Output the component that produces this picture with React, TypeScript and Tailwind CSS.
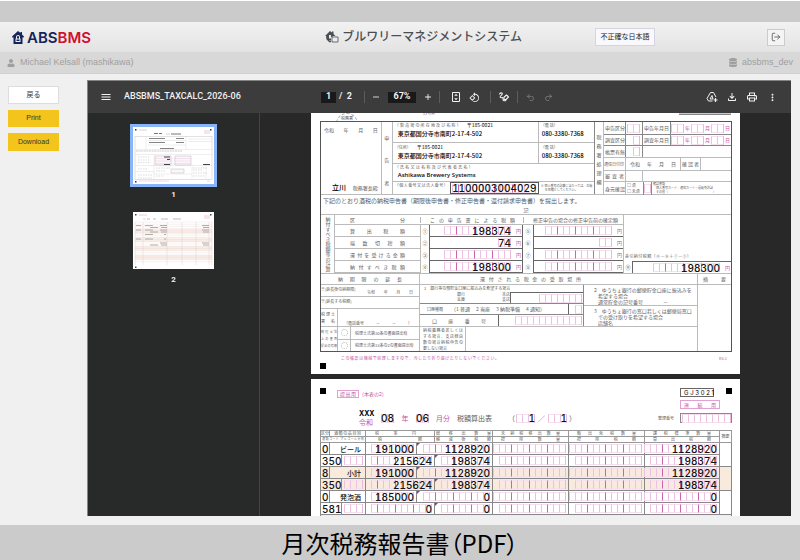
import { useState, type ReactNode } from 'react';
import clsx from 'clsx';
import { LogOut, Undo2, Redo2 } from 'lucide-react';
import { FaDatabase, FaUser } from 'react-icons/fa';
import {
  MdAdd,
  MdMenu,
  MdMoreVert,
  MdOutlineFileDownload,
  MdOutlinePrint,
  MdOutlineRotate90DegreesCcw,
  MdRemove,
} from 'react-icons/md';

/* ---------- small form helpers ---------- */

// Label whose characters are distributed over the full cell width
function Spread({ children, className }: { children: string; className?: string }) {
  return (
    <span className={clsx('block whitespace-nowrap [text-align-last:justify]', className)}>
      {children}
    </span>
  );
}

// Row of pink digit boxes, grouped by three from the right
function Digits({ count, value = '', faint = false }: { count: number; value?: string; faint?: boolean }) {
  return (
    <span className="grid shrink-0">
      <span className="col-start-1 row-start-1 flex self-center border-r border-[#e9b9dc]">
        {Array.from({ length: count }, (_, i) => (
          <span
            key={i}
            className={clsx(
              'h-[9px] w-[6px] border-y border-l border-y-[#f6e0f0]',
              !faint && i > 0 && (count - i) % 3 === 0 ? 'border-l-[#cf62ae]' : 'border-l-[#ebc0e0]'
            )}
          />
        ))}
      </span>
      <span className="col-start-1 row-start-1 self-center text-right font-['Inter'] text-[10px] leading-[10px] font-medium text-[#111] tabular-nums">
        {value}
      </span>
    </span>
  );
}

function Amount({ count = 11, value }: { count?: number; value?: string }) {
  return (
    <div className="flex h-full items-center justify-end gap-[5px] pr-px">
      <Digits count={count} value={value} />
      <span className="text-[5px] text-[#c552a3]">円</span>
    </div>
  );
}

function Marker() {
  return <span className="block h-[6px] w-[6px] bg-black" />;
}

/* ---------- page 1: tax return ---------- */

function DateBoxes() {
  return (
    <div className="flex items-center justify-end gap-px pr-px text-[5px] text-[#c552a3]">
      <Digits count={2} faint />年
      <Digits count={2} faint />月
      <Digits count={2} faint />日
    </div>
  );
}

function OfficeUse() {
  return (
    <div className="grid flex-1 grid-rows-[13px_11px_12px_13px_11px_13px] text-[5px] leading-[6px]">
      <div className="flex border-b border-[#888]">
        <span className="w-[21px] self-center px-px whitespace-nowrap">申告区分</span>
        <span className="flex w-[18px] items-center justify-end border-x border-[#888] pr-[2px]"><Digits count={2} faint /></span>
        <span className="w-[27px] self-center px-px whitespace-nowrap">申告年月日</span>
        <div className="flex flex-1 items-center justify-end border-l border-[#888]"><DateBoxes /></div>
      </div>
      <div className="flex border-b border-[#888]">
        <span className="w-[21px] self-center px-px whitespace-nowrap">調査区分</span>
        <span className="flex w-[18px] items-center justify-end border-x border-[#888] pr-[2px]"><Digits count={1} faint /></span>
        <span className="w-[27px] self-center px-px whitespace-nowrap">調査年月日</span>
        <div className="flex flex-1 items-center justify-end border-l border-[#888]"><DateBoxes /></div>
      </div>
      <div className="flex border-b border-[#bbb]">
        <span className="w-[21px] self-center px-px whitespace-nowrap">帳票有無</span>
        <span className="flex w-[18px] items-center justify-end border-x border-[#888] pr-[2px]"><Digits count={1} faint /></span>
      </div>
      <div className="flex border-b border-[#bbb]">
        <span className="w-[21px] self-center text-[4px] whitespace-nowrap">通信日付印</span>
        <div className="flex w-[55px] items-center justify-between border-l border-[#bbb] px-[4px]">
          <span>令和</span><span>年</span><span>月</span><span>日</span>
        </div>
        <span className="flex w-[21px] items-center border-x border-[#bbb]">
          <Spread className="w-full px-px">確認者</Spread>
        </span>
      </div>
      <div className="flex border-b border-[#bbb]">
        <Spread className="w-[21px] self-center px-px">審査者</Spread>
        <span className="w-[18px] border-x border-[#bbb]" />
      </div>
      <div className="flex">
        <span className="w-[21px] self-center px-px whitespace-nowrap">身元確認</span>
        <div className="w-[18px] border-l border-[#bbb] pl-px text-[4px] leading-[6px] whitespace-nowrap">
          <p>□ 済</p>
          <p>□ 未済</p>
        </div>
        <span className="flex w-[9px] items-center justify-center border-x border-[#888]"><Digits count={1} faint /></span>
        <div className="pl-px text-[3px] leading-[4px] whitespace-nowrap">
          <p>確認書類</p>
          <p className="pl-[3px]">個人番号カード／通知カード・運転免許証</p>
          <p className="pl-[3px]">その他（　　　　　　　　　　　　　　　）</p>
        </div>
      </div>
    </div>
  );
}

function Applicant() {
  return (
    <div className="flex w-[203px] flex-col border-r border-[#888] text-[4px] leading-[6px]">
      <div className="flex h-[21px] border-b border-[#bbb]">
        <div className="w-[146px] border-r border-[#bbb] pl-[2px]">
          <div className="flex gap-[6px]">
            <Spread className="w-[66px]">（製造場の所在地及び名称）</Spread>
            <span className="text-[5px] text-black">〒185-0021</span>
          </div>
          <p className="pl-[3px] text-[6px] leading-[12px] font-medium text-black">東京都国分寺市南町2-17-4-502</p>
        </div>
        <div className="pl-[2px]">
          <p>（電 話）</p>
          <p className="pl-px text-[6px] leading-[12px] font-medium text-black">080-3380-7368</p>
        </div>
      </div>
      <div className="flex h-[22px] border-b border-[#bbb]">
        <div className="w-[146px] border-r border-[#bbb] pt-px pl-[2px]">
          <div className="flex gap-[6px]">
            <Spread className="w-[16px]">（住所）</Spread>
            <span className="text-[5px] text-black">〒185-0021</span>
          </div>
          <p className="pl-[3px] text-[6px] leading-[12px] font-medium text-black">東京都国分寺市南町2-17-4-502</p>
        </div>
        <div className="pt-px pl-[2px]">
          <p>（電 話）</p>
          <p className="pl-px text-[6px] leading-[12px] font-medium text-black">080-3380-7368</p>
        </div>
      </div>
      <div className="h-[18px] border-b border-[#bbb] pl-[2px]">
        <Spread className="w-[78px]">（氏名又は名称及び代表者氏名）</Spread>
        <p className="pl-[3px] font-['Noto_Sans'] text-[6px] leading-[10px] font-medium text-black">Ashikawa Brewery Systems</p>
      </div>
      <div className="flex flex-1">
        <Spread className="w-[57px] pr-[2px] pl-[2px]">（個人番号又は法人番号）</Spread>
        <div className="flex w-[89px] items-center justify-center border border-[#555]">
          <Digits count={13} value="1100003004029" />
        </div>
        <div className="pt-[2px] pl-[2px] text-[3px] leading-[4px] whitespace-nowrap">
          <p>※ 個人番号の記載に当たっては、左端</p>
          <p className="pl-[4px]">を空欄としてください。</p>
        </div>
      </div>
    </div>
  );
}

const taxRows = [
  { label: '算出税額', left: '①', value: '198374', count: 11, right: '⑤', rightCount: 11 },
  { label: '端数切捨額', left: '②', value: '74', count: 2, right: '⑥', rightCount: 2 },
  { label: '還付を受ける金額', left: '③', value: '', count: 11, right: '⑦', rightCount: 11 },
  { label: '納付すべき税額', left: '④', value: '198300', count: 11, right: '⑧', rightCount: 11 },
];

function TaxAmounts() {
  return (
    <div className="flex h-[59px] border-b border-[#bbb] text-[5px] leading-[6px]">
      <div className="flex w-[14px] items-center justify-center border-r border-[#bbb]">
        <span className="[writing-mode:vertical-rl]">納付すべき税額等の計算</span>
      </div>
      <div className="w-[289px] border-r border-[#bbb]">
        <div className="flex h-[10px] items-center border-b border-[#bbb]">
          <Spread className="w-[85px] px-[15px]">区分</Spread>
          <Spread className="w-[103px] border-l border-[#bbb] pr-[8px] pl-[9px]">この申告書による税額</Spread>
          <span className="flex-1 border-l border-[#bbb] pl-[9px]">修正申告の場合の修正申告前の確定額</span>
        </div>
        {taxRows.map((row) => (
          <div key={row.label} className="flex h-[12px]">
            <Spread className="w-[85px] border-b border-[#bbb] px-[15px] leading-[12px]">{row.label}</Spread>
            <span className="w-[9px] border-l border-[#bbb] text-center leading-[12px]">{row.left}</span>
            <div className="w-[94px] border-x border-b border-[#666]"><Amount count={row.count} value={row.value} /></div>
            <span className="w-[10px] text-center leading-[12px]">{row.right}</span>
            <div className="flex-1 border-b border-l border-[#666]"><Amount count={row.rightCount} /></div>
          </div>
        ))}
      </div>
      <div className="flex flex-1 flex-col justify-end">
        <Spread className="mb-[2px] ml-px w-[66px] text-[4px]">差引納付税額（④－⑧＋⑦－③）</Spread>
        <div className="flex h-[12px]">
          <span className="w-[8px] text-center leading-[12px]">⑨</span>
          <div className="flex-1 border-t border-l border-[#666]"><Amount value="198300" /></div>
        </div>
      </div>
    </div>
  );
}

function Extension() {
  return (
    <div className="w-[99px] border-r border-[#bbb] text-[4px] leading-[6px]">
      <div className="flex h-[12px] border-b border-[#bbb] pt-px">
        <span className="w-[46px] whitespace-nowrap">※(延長後の納期限)</span>
        <div className="flex flex-1 justify-between pt-[3px] pr-[6px]">
          <span>令和</span><span>年</span><span>月</span><span>日</span>
        </div>
      </div>
      <div className="h-[12px] border-b border-[#bbb] pt-px">※(延長する税額)</div>
      <div className="flex h-[18px] border-b border-[#bbb]">
        <div className="flex w-[17px] flex-col justify-between border-r border-[#bbb] py-[2px] pr-[2px]">
          <Spread>税理士</Spread>
          <Spread>署名</Spread>
        </div>
        <span className="self-end pl-[6px] whitespace-pre">（電話番号　　　－　　　－　　　）</span>
      </div>
      <div className="flex h-[24px]">
        <div className="w-[17px] border-r border-[#bbb] pt-[2px] text-[3px] leading-[7px] whitespace-nowrap">
          <Spread>税理士法</Spread>
          <Spread>上の書面</Spread>
          <Spread>提出の有無</Spread>
        </div>
        <div className="flex flex-1 flex-col">
          {['税理士法第30条の書面提出有', '税理士法第33条の2の書面提出有'].map((label) => (
            <div key={label} className="flex flex-1 border-b border-[#bbb] last:border-b-0">
              <span className="flex w-[13px] items-center justify-center border-r border-[#bbb]">
                <span className="h-[7px] w-[7px] rounded-full border border-dotted border-[#bbb]" />
              </span>
              <span className="self-center pl-[4px] whitespace-nowrap">{label}</span>
            </div>
          ))}
        </div>
      </div>
    </div>
  );
}

function Refund() {
  return (
    <div className="flex w-[278px] flex-col border-r border-[#bbb] text-[5px] leading-[6px]">
      <div className="flex h-[42px] border-b border-[#bbb]">
        <div className="flex w-[164px] flex-col border-r border-[#888]">
          <p className="h-[7px] pt-px pl-[4px] text-[4px] leading-[5px] whitespace-nowrap">1　銀行等の預貯金口座に振込みを希望する場合</p>
          <div className="flex h-[11px] text-[4px] leading-[5px]">
            <div className="w-[82px] pl-[37px]"><p>銀行</p><p>金庫</p></div>
            <div className="w-[8px]"><p>本店</p><p>支店</p></div>
            <div className="flex flex-1 items-center justify-end border-t border-l border-[#666] pr-px"><Digits count={7} faint /></div>
          </div>
          <div className="flex h-[12px] items-center border-y border-[#888] pl-[7px] whitespace-pre">
            <span className="text-[4px]">口座種類</span>
            <span className="flex-1 pl-[8px]">（1 普通　 2 当座　 3 納税準備　 4 通知）</span>
            <span className="flex h-full w-[15px] items-center justify-end border-l border-[#666] pr-px"><Digits count={1} faint /></span>
          </div>
          <div className="flex flex-1 items-center">
            <Spread className="w-[78px] pr-[12px] pl-[12px]">口座番号</Spread>
            <div className="flex h-full flex-1 items-center justify-end border-l border-[#666] pr-px"><Digits count={11} faint /></div>
          </div>
        </div>
        <div className="flex flex-1 flex-col whitespace-pre">
          <div className="h-[21px] border-b border-[#bbb] pt-[2px] pl-[10px]">
            <p>2　ゆうちょ銀行の郵便貯金口座に振込みを</p>
            <p className="pl-[4px]">希望する場合</p>
            <p className="pl-[4px]">通常貯金の記号番号　<span className="border-b border-[#bbb]">　　　－　　　　</span></p>
          </div>
          <div className="pt-[2px] pl-[10px]">
            <p>3　ゆうちょ銀行の窓口若しくは郵便局窓口</p>
            <p className="pl-[4px]">での受け取りを希望する場合</p>
            <p className="pl-[4px]">店舗名<span className="border-b border-[#bbb]">　　　　　　　　　　　</span></p>
          </div>
        </div>
      </div>
      <div className="w-[46px] flex-1 border-r border-[#bbb] pl-[3px] text-[4px] leading-[6px]">
        <Spread className="w-[40px]">納税義務者若しくは</Spread>
        <Spread className="w-[40px]">する場合、支店経由</Spread>
        <Spread className="w-[40px]">数の場合納税申告の</Spread>
        <p>要しない場合</p>
      </div>
    </div>
  );
}

function ReturnPage() {
  return (
    <section className="h-[261px] w-[429px] shrink-0 bg-white pr-[8px] pl-[9px] text-[#5c5c5c]">
      <div className="flex h-[8px] items-start overflow-hidden">
        <span className="ml-[16px] h-[22px] w-[22px] rounded-full border border-dashed border-[#aaa] pt-[2px] text-center text-[4px] leading-[5px]">税務署</span>
        <span className="-mt-[6px] ml-[63px] text-[7px] leading-[9px] text-[#c552a3]">令和</span>
        <span className="ml-auto mr-[1px] h-[2px] w-[52px] border-b border-[#888] bg-[#e0b8d6]" />
      </div>
      <div className="border border-[#555]">
        <div className="flex h-[73px] border-b border-[#bbb]">
          <div className="flex w-[61px] flex-col justify-between border-r border-[#bbb] px-[3px] pt-[5px] pb-[3px]">
            <div className="flex justify-between text-[5px] leading-[6px]">
              <span>令和</span><span>年</span><span>月</span><span>日</span>
            </div>
            <div className="flex items-end justify-between pl-[8px] whitespace-nowrap">
              <span className="text-[7px] leading-[8px] font-medium text-black">立川</span>
              <span className="text-[5px] leading-[6px]">税務署長殿</span>
            </div>
          </div>
          <div className="flex w-[11px] flex-col items-center justify-around border-r border-[#bbb] pt-[5px] text-[5px] leading-[6px]">
            <span>申</span><span>告</span><span>者</span>
          </div>
          <Applicant />
          <div className="flex w-[9px] flex-col items-center justify-center border-r border-[#bbb] pt-[2px] text-[5px] leading-[9px]">
            <span>税</span><span>務</span><span>署</span><span>処</span><span>理</span><span>欄</span>
          </div>
          <OfficeUse />
        </div>
        <div className="h-[20px] border-b border-[#bbb]">
          <p className="pt-px pl-[2px] text-[6px] leading-[9px]">下記のとおり酒税の納税申告書（期限後申告書・修正申告書・還付請求申告書）を提出します。</p>
          <p className="text-center text-[5px] leading-[9px]">記</p>
        </div>
        <TaxAmounts />
        <div className="flex h-[11px] items-center border-b border-[#bbb] text-[5px] leading-[10px]">
          <Spread className="w-[99px] border-r border-[#bbb] px-[17px]">納期限の延長</Spread>
          <Spread className="w-[278px] border-r border-[#bbb] pr-[116px] pl-[60px]">還付される税金の受取場所</Spread>
          <Spread className="flex-1 px-[5px]">摘要</Spread>
        </div>
        <div className="flex h-[66px]">
          <Extension />
          <Refund />
        </div>
      </div>
      <div className="flex justify-between pt-[3px] pl-[21px] text-[4px] leading-[7px] text-[#c552a3]">
        <Spread className="w-[158px]">この帳票は機械で処理しますので、汚したり折り曲げたりしないでください。</Spread>
        <span className="pr-[5px]">R3.1</span>
      </div>
      <div className="pt-px"><Marker /></div>
    </section>
  );
}

/* ---------- page 2: tax calculation table ---------- */

interface Group {
  code: string;
  name: string;
  rate: string;
  volume: string;
  kind: string;
  tax: string;
  net: string;
}

const groups: Group[] = [
  { code: '0', name: 'ビール', rate: '191000', volume: '1128920', kind: '350', tax: '215624', net: '198374' },
  { code: '8', name: '小計', rate: '191000', volume: '1128920', kind: '350', tax: '215624', net: '198374' },
  { code: '0', name: '発泡酒', rate: '185000', volume: '0', kind: '581', tax: '0', net: '0' },
];

function Cell({ span = 1, notch = false, children }: { span?: number; notch?: boolean; children: ReactNode }) {
  return (
    <td colSpan={span} className="border border-[#888] p-0">
      <div className="flex h-[11px] items-center justify-end pr-[2px]">
        {notch && <span className="mr-auto h-0 w-0 self-start border-t-[3px] border-r-[3px] border-t-[#a8327f] border-r-transparent" />}
        {children}
      </div>
    </td>
  );
}

function CalcTable() {
  const th = 'h-[6px] border border-[#999] p-0 font-normal';
  return (
    <table className="w-full table-fixed border-collapse border border-[#444] text-[4px] leading-[5px]">
      <colgroup>
        <col className="w-[9px]" />
        <col className="w-[12px]" />
        <col className="w-[24px]" />
        <col className="w-[51px]" />
        <col className="w-[18px]" />
        <col className="w-[58px]" />
        <col className="w-[76px]" />
        <col className="w-[76px]" />
        <col className="w-[75px]" />
        <col />
      </colgroup>
      <thead>
        <tr>
          <th className={th}>区分</th>
          <th colSpan={2} className={th}><Spread className="px-[4px]">酒類の品目別</Spread></th>
          <th colSpan={2} className={th}><Spread className="pr-[18px] pl-[9px]">税率円</Spread></th>
          <th className={th}><Spread className="px-px">総移出数量</Spread></th>
          <th className={th}><Spread className="px-[8px]">未納税移出数量</Spread></th>
          <th className={th}><Spread className="px-[8px]">輸出免税数量</Spread></th>
          <th className={th}><Spread className="px-[8px]">課税標準数量</Spread></th>
          <th rowSpan={2} className={th}>摘要</th>
        </tr>
        <tr>
          <th colSpan={3} className={th}><Spread className="px-px text-[3px]">酒類コード アルコール分別</Spread></th>
          <th colSpan={2} className={th}><Spread className="px-[12px]">税額</Spread></th>
          <th className={th}><Spread className="px-px">軽減後税額</Spread></th>
          <th className={th}><Spread className="px-[8px]">控除数量</Spread></th>
          <th className={th}><Spread className="px-[8px]">控除税額</Spread></th>
          <th className={th}><Spread className="px-[8px]">算出税額</Spread></th>
        </tr>
      </thead>
      {groups.map((g, i) => (
        <tbody key={i} className={clsx('border-t border-[#444]', i % 2 === 1 && 'bg-[#f8eadc]')}>
          <tr>
            <td className="border border-[#888] p-0 pl-px font-['Inter'] text-[10px] leading-[10px] font-medium text-[#111]">{g.code}</td>
            <td colSpan={2} className="border border-[#888] p-0 pr-[4px] text-right text-[7px] leading-[10px] font-medium text-[#111]">{g.name}</td>
            <Cell><Digits count={7} value={g.rate} /></Cell>
            <Cell span={2} notch><Digits count={11} value={g.volume} /></Cell>
            <Cell><Digits count={12} /></Cell>
            <Cell><Digits count={12} /></Cell>
            <Cell><Digits count={12} value={g.volume} /></Cell>
            <td rowSpan={2} className="border border-[#888] p-0" />
          </tr>
          <tr>
            <td colSpan={2} className="border border-[#888] p-0 pl-px font-['Inter'] text-[10px] leading-[10px] font-medium text-[#111] tabular-nums">{g.kind}</td>
            <Cell><Digits count={3} faint /></Cell>
            <Cell span={2}><Digits count={10} value={g.tax} /></Cell>
            <Cell notch><Digits count={8} value={g.net} /></Cell>
            <Cell><Digits count={11} /></Cell>
            <Cell><Digits count={11} /></Cell>
            <Cell><Digits count={11} value={g.net} /></Cell>
          </tr>
        </tbody>
      ))}
      <tbody className="border-t border-[#444] bg-[#f8eadc]">
        <tr>
          <td colSpan={10} className="h-[12px] border border-[#888] p-0" />
        </tr>
      </tbody>
    </table>
  );
}

function CalcPage() {
  return (
    <section className="h-[300px] w-[429px] shrink-0 bg-white pt-[9px] pr-[8px] pl-[9px] text-[#5c5c5c]">
      <div className="flex h-[42px] justify-between">
        <div>
          <div className="flex items-start text-[5px] leading-[7px] text-[#c552a3]">
            <Marker />
            <span className="mt-[2px] ml-[11px] w-[22px] border border-[#e29fcf]"><Spread className="px-[2px] leading-[6px]">提出用</Spread></span>
            <span className="mt-[2px]">（本表の2）</span>
          </div>
          <div className="flex h-[32px] items-center pt-[8px] pl-[39px] text-[7px] leading-[8px]">
            <div className="w-[22px]">
              <p className="font-['Inter'] font-bold text-black">XXX</p>
              <p className="text-[#c552a3]">令和</p>
            </div>
            <Digits count={2} value="08" faint />
            <span className="w-[22px] text-center text-[#c552a3]">年</span>
            <Digits count={2} value="06" faint />
            <span className="w-[28px] text-center text-[#c552a3]">月分</span>
            <span className="w-[51px]">税額算出表</span>
            <span className="w-[8px]">（</span>
            <Digits count={3} value="1" faint />
            <span className="w-[13px] text-center text-[#c552a3]">／</span>
            <Digits count={3} value="1" faint />
            <span className="pl-[2px]">）</span>
          </div>
        </div>
        <div className="w-[74px]">
          <div className="flex items-start justify-between pl-[22px]">
            <Spread className="w-[34px] border border-[#666] px-[3px] font-['Inter'] text-[6px] leading-[7px] text-black">G J 3 0 2 1</Spread>
            <Marker />
          </div>
          <Spread className="mt-[3px] ml-[22px] w-[40px] border border-[#e29fcf] px-[3px] text-[5px] leading-[7px] text-[#c552a3]">連続用</Spread>
          <div className="mt-[4px] flex items-center justify-between">
            <span className="text-[4px]">整理番号</span>
            <span className="flex h-[10px] w-[52px] items-center justify-center border border-[#888]"><Digits count={8} faint /></span>
          </div>
        </div>
      </div>
      <CalcTable />
    </section>
  );
}

/* ---------- thumbnails ---------- */

function ReturnThumb() {
  return (
    <svg viewBox="0 0 81 57" className="block h-[57px] w-[81px] bg-white" aria-hidden="true">
      <path d="M2 2h1.5v1.500H2zM77 2h1.500v1.500H77zM2 54h1.500v1.500H2z" fill="#333" />
      <path d="M6 3h8M71 4h6M71 6h6M33 7h4" stroke="#edc8e0" strokeWidth="1" />
      <path d="M21 6.500h4M26 6.500h3M38 7h10" stroke="#777" strokeWidth="1" />
      <rect x="2" y="9.500" width="77" height="43" fill="none" stroke="#c4c4c4" strokeWidth=".5" />
      <path d="M13 9.500v13M53 9.500v13M55 12h24M55 14.500h24M15 13.500h38M15 18h38M2 22.500h77M2 27.500h77M2 38.500h77M21 27.500v25M59 38.500v14M73 36v16M2 44.500h19M21 47h38" stroke="#d4d4d4" strokeWidth=".4" />
      <path d="M16 11.500h16M16 15.500h16M43 11.500h8M43 15.500h8M27 21.500h14" stroke="#666" strokeWidth=".8" />
      <path d="M3 24h46" stroke="#b4b4b4" strokeWidth=".7" strokeDasharray="2 .6" />
      <path d="M22 29h16v9H22zM42 29h16v9H42z" fill="#fcf6fa" stroke="#aaa" strokeWidth=".4" />
      <path d="M22 31.500h36M22 34h36M22 36.500h36" stroke="#e6c4dc" strokeWidth=".4" />
      <path d="M31 30h6M34 32.500h3M31 37.500h6M70 37.500h7" stroke="#444" strokeWidth="1" />
      <path d="M5 30h12M5 33h12M5 35.500h12M23 41h14M23 44h10M23 49h8M60 41h14M60 43h10M60 46h14M60 49h12M5 42h10M5 48h14M5 51h14" stroke="#c4c4c4" strokeWidth=".6" strokeDasharray="1.500 1" />
      <path d="M38 42h13v4H38z" fill="#fcf6fa" stroke="#aaa" strokeWidth=".4" />
      <path d="M6 54h30M74 54h3" stroke="#edc8e0" strokeWidth=".8" />
    </svg>
  );
}

function CalcThumb() {
  const bands = [17, 25.5, 34, 43];
  return (
    <svg viewBox="0 0 81 57" className="block h-[57px] w-[81px] bg-white" aria-hidden="true">
      <path d="M2 2h1.500v1.500H2zM77 2h1.500v1.500H77zM2 54.500h1.500V56H2z" fill="#444" />
      <path d="M6 3h8M71 4h6M71 6h6M10 7h3" stroke="#edc8e0" strokeWidth="1" />
      <path d="M14 7h3M20 7h3M28 7h7M40 7h8" stroke="#aaa" strokeWidth=".8" />
      {bands.map((y) => (
        <rect key={y} x="2" y={y} width="77" height="4.500" fill="#faeee6" />
      ))}
      {Array.from({ length: 19 }, (_, i) => (
        <path key={i} d={`M2 ${10 + i * 2.2}h77`} stroke="#e2cccc" strokeWidth=".3" />
      ))}
      <path d="M2 10v43M10 10v43M34 10v43M49 10v43M63 10v43M76 10v43M79 10v43" stroke="#dcc8ce" strokeWidth=".4" />
      <path d="M12 13.500h8M17 15.500h8M27 13.500h7M28 15.500h6M69 13.500h7M70 15.500h6M12 18h8M17 20h8M27 18h7M28 20h6M69 18h7M70 20h6M12 22.500h8M31 22.500h2M12 27h8M31 27h2M17 33h8M27 31h7M28 33h6M69 31h7M70 33h6M3 13.500h5M3 18h5M3 27h5" stroke="#a09a9a" strokeWidth=".8" />
    </svg>
  );
}

/* ---------- icons missing from the icon sets ---------- */

function FitPageIcon() {
  return (
    <svg viewBox="0 0 24 24" className="h-3 w-3" fill="currentColor" aria-hidden="true">
      <path fillRule="evenodd" d="M6 2h12a2 2 0 0 1 2 2v16a2 2 0 0 1-2 2H6a2 2 0 0 1-2-2V4c0-1.100.9-2 2-2zm0 2v16h12V4zm6 1.500 3.500 4h-7zm0 13-3.500-4h7z" />
    </svg>
  );
}

function InkIcon() {
  return (
    <svg viewBox="0 0 24 24" className="h-3 w-3" fill="none" stroke="currentColor" strokeWidth="2.200" strokeLinecap="round" strokeLinejoin="round" aria-hidden="true">
      <path d="M3 6c2-3 6-3 5.500 0S3 10 4.500 12.500 9 12 10 14s-1 4 1 5 4 0 5-1" />
      <path d="M12 12.500 17 8l4 4-5 5h-4z" />
    </svg>
  );
}

function DriveAddIcon() {
  return (
    <svg viewBox="0 0 24 24" className="h-3 w-3" fill="none" stroke="currentColor" strokeWidth="2" strokeLinejoin="round" aria-hidden="true">
      <path d="M13 20H5l-3-5L9 3h6l5 9M12 9l-4 7h6z" />
      <path d="M19 14v8M15 18h8" strokeWidth="2.400" />
    </svg>
  );
}

function HouseLogo() {
  return (
    <svg viewBox="0 0 24 26" className="h-[13px] w-[12px]" aria-hidden="true">
      <path d="M12 0 17 4V2h3v5l4 4-1.500 2.500L21 12.500V26H3V12.500L1.500 13.500 0 11z" fill="#14245c" />
      <path d="M8 12a4 4 0 0 1 8 0v3h1v7H7v-7h1z" fill="#f0f0f0" />
      <path d="M10 12a2 2 0 0 1 4 0v3h-4zM9 17h6v3H9z" fill="#14245c" />
    </svg>
  );
}

function HouseCopyIcon() {
  return (
    <svg viewBox="0 0 28 24" className="h-[12px] w-[14px]" aria-hidden="true">
      <path d="M10 0 14 3V1h3v5l4 4h-6v2h-3V8H8v7h4v4H7l-4-5v-4H0z" fill="#4a4f54" />
      <path d="M4 10v6l5 5h3" fill="none" stroke="#4a4f54" strokeWidth="2.500" />
      <path d="M14 12h12v10H14z" fill="#ececec" stroke="#5a5f64" strokeWidth="1.800" />
    </svg>
  );
}

/* ---------- viewer ---------- */

function ToolButton({ label, children, className }: { label: string; children: ReactNode; className?: string }) {
  return (
    <button type="button" aria-label={label} className={clsx('flex h-3 w-3 shrink-0 items-center justify-center', className)}>
      {children}
    </button>
  );
}

function Toolbar() {
  const [page, setPage] = useState('1');
  const [zoom, setZoom] = useState('67%');

  return (
    <div className="flex h-8 shrink-0 items-center bg-[#3c3c3c] pr-[13px] pl-3 font-['Roboto'] text-[9px] font-bold text-[#f1f1f1]">
      <ToolButton label="Menu"><MdMenu className="h-3 w-3" /></ToolButton>
      <span className="ml-3 w-[197px] font-medium whitespace-nowrap">ABSBMS_TAXCALC_2026-06</span>
      <input
        aria-label="Page"
        value={page}
        onChange={(e) => setPage(e.target.value)}
        className="h-[11px] w-[15px] bg-[#191919] text-center outline-none"
      />
      <span className="ml-[3px] w-[25px] whitespace-pre">/  2</span>
      <span className="h-3 w-px bg-[#5c5c5c]" />
      <ToolButton label="Zoom out" className="ml-[5px]"><MdRemove className="h-[10px] w-[10px]" /></ToolButton>
      <input
        aria-label="Zoom"
        value={zoom}
        onChange={(e) => setZoom(e.target.value)}
        className="mx-[6px] h-[11px] w-7 bg-[#191919] text-center outline-none"
      />
      <ToolButton label="Zoom in"><MdAdd className="h-[10px] w-[10px]" /></ToolButton>
      <span className="ml-[5px] h-3 w-px bg-[#5c5c5c]" />
      <ToolButton label="Fit to page" className="ml-[10px]"><FitPageIcon /></ToolButton>
      <ToolButton label="Rotate" className="ml-[6px]"><MdOutlineRotate90DegreesCcw className="h-[11px] w-[11px]" /></ToolButton>
      <span className="ml-[10px] h-3 w-px bg-[#5c5c5c]" />
      <ToolButton label="Annotate" className="ml-[7px]"><InkIcon /></ToolButton>
      <span className="ml-[7px] h-3 w-px bg-[#5c5c5c]" />
      <ToolButton label="Undo" className="ml-[6px] text-[#858585]"><Undo2 className="h-[9px] w-[9px]" /></ToolButton>
      <ToolButton label="Redo" className="ml-[6px] text-[#858585]"><Redo2 className="h-[9px] w-[9px]" /></ToolButton>
      <div className="ml-auto flex gap-2">
        <ToolButton label="Save to Drive"><DriveAddIcon /></ToolButton>
        <ToolButton label="Download file"><MdOutlineFileDownload className="h-3 w-3" /></ToolButton>
        <ToolButton label="Print file"><MdOutlinePrint className="h-3 w-3" /></ToolButton>
        <ToolButton label="More"><MdMoreVert className="h-[11px] w-[11px]" /></ToolButton>
      </div>
    </div>
  );
}

function PdfViewer() {
  return (
    <div className="flex min-w-0 flex-1 flex-col overflow-hidden border-t border-l border-[#858585]">
      <Toolbar />
      <div className="flex min-h-0 flex-1">
        <nav className="flex w-[172px] shrink-0 flex-col items-center border-r border-[#444] bg-[#282a29] pt-[11px] font-['Roboto'] text-[8px] leading-[12px] font-bold text-[#eee]">
          <button type="button" className="flex flex-col items-center">
            <span className="border-3 border-[#8ab4f8]"><ReturnThumb /></span>
            <span className="mt-[2px]">1</span>
          </button>
          <button type="button" className="mt-[11px] flex flex-col items-center">
            <CalcThumb />
            <span className="mt-[5px]">2</span>
          </button>
        </nav>
        <main className="flex min-w-0 flex-1 flex-col items-center gap-[5px] overflow-hidden bg-[#282828] font-['Noto_Sans_CJK_JP',sans-serif]">
          <ReturnPage />
          <CalcPage />
        </main>
      </div>
    </div>
  );
}

/* ---------- application shell ---------- */

export default function App() {
  return (
    <div className="flex h-screen flex-col overflow-hidden bg-[#f0f0f0] font-['Liberation_Sans','Noto_Sans_CJK_JP',sans-serif]">
      <div className="h-[22px] shrink-0 border-t border-white bg-[#cbcbcb]" />
      <header className="flex h-[30px] shrink-0 items-center bg-linear-to-b from-[#f2f2f2] to-[#e3e3e3] pr-[15px] pl-3">
        <a href="#" className="flex flex-1 items-center gap-[3px] font-['Inter'] text-[15px] leading-none font-semibold text-[#14245c]">
          <HouseLogo />
          <span>ABS<span className="text-[#d0102c]">BMS</span></span>
        </a>
        <h1 className="flex items-center gap-[3px] text-[12px] font-medium text-[#4a4f54]">
          <HouseCopyIcon />
          ブルワリーマネジメントシステム
        </h1>
        <button type="button" className="ml-[73px] h-[18px] w-[60px] border border-[#d5d5e0] bg-[#f8f8fd] text-[7px] whitespace-nowrap text-[#222]">
          不正確な日本語
        </button>
        <button type="button" aria-label="Log out" className="ml-[112px] flex h-[17px] w-[18px] items-center justify-center border border-[#ccc] bg-[#f4f4f4] text-[#555]">
          <LogOut className="h-[10px] w-[10px]" />
        </button>
      </header>
      <div className="flex h-[22px] shrink-0 items-center justify-between border-b border-[#cfcfcf] bg-[#d8d8d8] px-[7px] text-[9px] text-[#a0a0a0]">
        <span className="flex items-center gap-[5px]"><FaUser className="h-2 w-2" />Michael Kelsall (mashikawa)</span>
        <span className="flex items-center gap-[5px]"><FaDatabase className="h-[9px] w-[8px]" />absbms_dev</span>
      </div>
      <div className="flex min-h-0 flex-1 pt-[6px] pr-[9px] pb-[9px] pl-2">
        <aside className="mr-7 flex w-[51px] shrink-0 flex-col gap-[6px] pt-[6px] text-[7px] text-[#333]">
          <button type="button" className="h-[18px] border border-[#ddd] bg-white">戻る</button>
          <button type="button" className="h-[17px] bg-[#f3c41c]">Print</button>
          <button type="button" className="h-[18px] bg-[#f3c41c]">Download</button>
        </aside>
        <PdfViewer />
      </div>
      <footer className="flex h-[35px] shrink-0 items-center justify-center bg-[#cbcbcb] font-['Noto_Sans_CJK_JP',sans-serif] text-[24px] leading-none text-black [font-feature-settings:'palt']">
        月次税務報告書（PDF）
      </footer>
    </div>
  );
}
